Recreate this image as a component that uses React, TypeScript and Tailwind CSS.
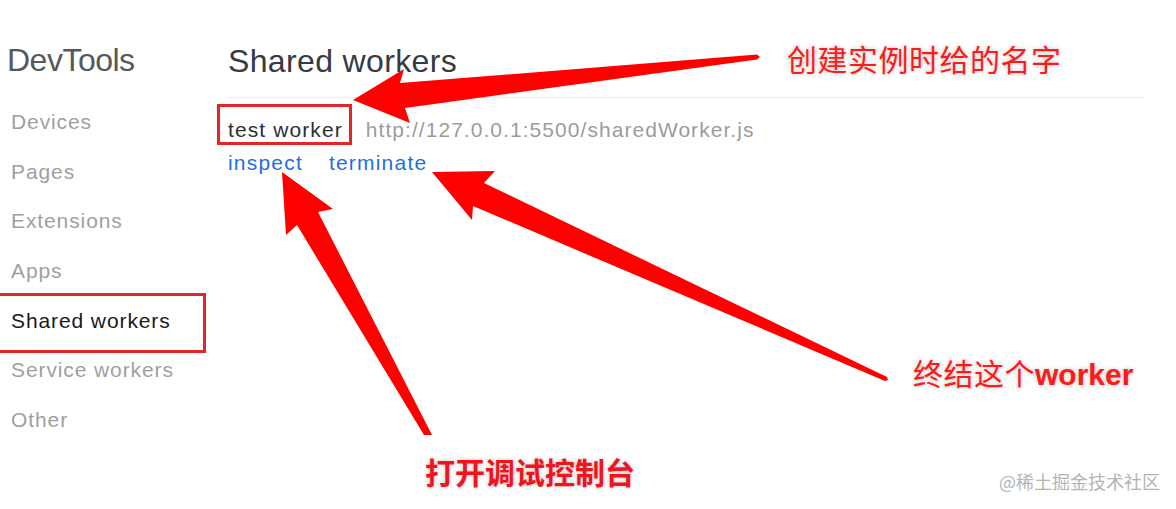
const navItems = [
  { label: 'Devices', active: false },
  { label: 'Pages', active: false },
  { label: 'Extensions', active: false },
  { label: 'Apps', active: false },
  { label: 'Shared workers', active: true },
  { label: 'Service workers', active: false },
  { label: 'Other', active: false },
];

const sans = "font-['Liberation_Sans',Arial,sans-serif]";
const cjk = "font-['Noto_Sans_CJK_SC','Noto_Sans',sans-serif]";

// the red arrows drawn over the screenshot
const Arrows = () => (
  <svg
    className="absolute inset-0 pointer-events-none"
    width="1176"
    height="509"
    viewBox="0 0 1176 509"
  >
    <g fill="#ff0000">
      {/* to the worker name */}
      <polygon points="353,100 404,69 400,83 757,54.5 760,57 757,59.5 405,108 410,123" />
      {/* to inspect */}
      <polygon points="282,172 333,209 318,212 432,435 424,435 297,225 286,235" />
      {/* to terminate */}
      <polygon points="432,172 495,171 484,183 887,377 888,380 885,381 473,206 472,220" />
    </g>
  </svg>
);

export default function App() {
  return (
    <div className={`relative w-[1176px] h-[509px] bg-white overflow-hidden ${sans}`}>
      <div className="flex">
        <aside className="w-[215px] shrink-0 pl-[7px] pt-[40px]">
          <h1 className="text-[32px] leading-[40px] tracking-[-0.5px] text-[#55595e]">DevTools</h1>
          <nav className="mt-[17px] flex flex-col">
            {navItems.map((item) => (
              <div
                key={item.label}
                className={`h-[49.67px] flex items-center pl-[4px] text-[21px] tracking-[0.9px] ${
                  item.active ? 'text-[#1a1a1a]' : 'text-[#a0a0a0]'
                }`}
              >
                {item.label}
              </div>
            ))}
          </nav>
        </aside>

        <main className="flex-1 pl-[13px] pr-[31px] pt-[41px]">
          <h2 className="text-[32px] leading-[40px] tracking-[0.35px] text-[#363b41]">Shared workers</h2>
          <div className="mt-[16px] border-t border-[#ececec]" />
          <div className="mt-[17px] flex items-center h-[30px] text-[21px] tracking-[1.1px]">
            <span className="text-[#2b2f33]">test worker</span>
            <span className="ml-[23px] text-[#9c9c9c] tracking-[1.05px]">http://127.0.0.1:5500/sharedWorker.js</span>
          </div>
          <div className="mt-[3px] flex items-center gap-[26px] h-[30px] text-[21px] tracking-[1.2px] text-[#1f6fde]">
            <span>inspect</span>
            <span>terminate</span>
          </div>
        </main>
      </div>

      {/* annotation boxes */}
      <div className="absolute left-[-4px] top-[293px] w-[210px] h-[60px] border-[3px] border-[#e3242b]" />
      <div className="absolute left-[217px] top-[104px] w-[135px] h-[41px] border-[3px] border-[#e3242b]" />

      <Arrows />

      <div
        className={`absolute left-[787px] top-[43px] text-[30px] leading-none tracking-[0.5px] text-[#ff1a1a] ${cjk} [text-shadow:0_0_4px_rgba(0,0,0,0.25)]`}
      >
        创建实例时给的名字
      </div>
      <div
        className={`absolute left-[913px] top-[357px] text-[30px] leading-none tracking-[0.5px] text-[#ff1a1a] ${cjk} [text-shadow:0_0_4px_rgba(0,0,0,0.25)]`}
      >
        终结这个<span className={`font-bold tracking-normal ${sans}`}>worker</span>
      </div>
      <div
        className={`absolute left-[425px] top-[456px] text-[30px] leading-none font-bold text-[#f0141e] ${cjk} [text-shadow:0_0_4px_rgba(0,0,0,0.25)]`}
      >
        打开调试控制台
      </div>
      <div className={`absolute left-[999px] top-[472px] text-[18px] leading-none text-[#b4b4b4] ${cjk}`}>
        @稀土掘金技术社区
      </div>
    </div>
  );
}
